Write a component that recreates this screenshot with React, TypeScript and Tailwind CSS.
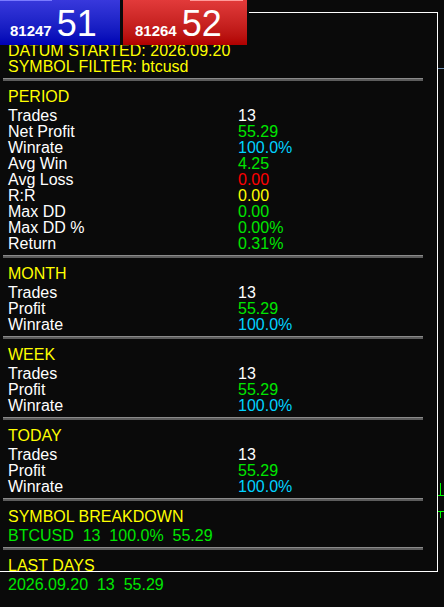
import React from "react";

type Row = { label: string; value: string; color: string };

const WHITE = "text-white";
const GREEN = "text-[#00e600]";
const CYAN = "text-[#00d2ff]";
const RED = "text-[#ff0000]";
const YELLOW = "text-[#ffff00]";

const period: Row[] = [
  { label: "Trades", value: "13", color: WHITE },
  { label: "Net Profit", value: "55.29", color: GREEN },
  { label: "Winrate", value: "100.0%", color: CYAN },
  { label: "Avg Win", value: "4.25", color: GREEN },
  { label: "Avg Loss", value: "0.00", color: RED },
  { label: "R:R", value: "0.00", color: YELLOW },
  { label: "Max DD", value: "0.00", color: GREEN },
  { label: "Max DD %", value: "0.00%", color: GREEN },
  { label: "Return", value: "0.31%", color: GREEN },
];

const short: Row[] = [
  { label: "Trades", value: "13", color: WHITE },
  { label: "Profit", value: "55.29", color: GREEN },
  { label: "Winrate", value: "100.0%", color: CYAN },
];

function Separator() {
  return (
    <div className="ml-[-5px] mt-[3px] mb-[8px] h-[3px] w-[420px] border-t border-[#8a8a8a] bg-[#5c5c5c]" />
  );
}

function Section({ title, rows }: { title: string; rows: Row[] }) {
  return (
    <>
      <div className="mb-[3px] text-[#ffff00]">{title}</div>
      {rows.map((r) => (
        <div key={r.label} className="grid grid-cols-[230px_1fr]">
          <span className="text-white">{r.label}</span>
          <span className={r.color}>{r.value}</span>
        </div>
      ))}
      <Separator />
    </>
  );
}

function PriceButton({
  code,
  big,
  tone,
}: {
  code: string;
  big: string;
  tone: "blue" | "red";
}) {
  const blue = tone === "blue";
  return (
    <div
      className={
        blue
          ? "relative flex h-[45px] w-[120px] items-baseline gap-[5px] bg-linear-to-b from-[#3838dc] to-[#0000b4] pl-[10px] pt-[6px]"
          : "relative flex h-[45px] w-[124px] items-baseline gap-[5px] bg-linear-to-b from-[#e23a3a] to-[#b00000] pl-[12px] pt-[6px]"
      }
    >
      {/* top highlight strip */}
      <div
        className={
          blue
            ? "absolute left-0 top-0 h-px w-[52px] bg-[#7a7aff]"
            : "absolute right-[4px] top-0 h-px w-[53px] bg-[#ff9a9a]"
        }
      />
      <span className="text-[15px] font-bold leading-none text-white">{code}</span>
      <span className="text-[36px] leading-none text-white">{big}</span>
    </div>
  );
}

export default function App() {
  return (
    <div className="relative h-[607px] w-[444px] overflow-hidden bg-[#0a0a0a] font-['Liberation_Sans',Arial,sans-serif] text-[16px] leading-[16px]">
      {/* stats panel */}
      <div className="flex flex-col pl-[8px] pt-[43px]">
        <div className="text-[#ffff00]">DATUM STARTED: 2026.09.20</div>
        <div className="text-[#ffff00]">SYMBOL FILTER: btcusd</div>
        <Separator />
        <Section title="PERIOD" rows={period} />
        <Section title="MONTH" rows={short} />
        <Section title="WEEK" rows={short} />
        <Section title="TODAY" rows={short} />
        <div className="mb-[3px] text-[#ffff00]">SYMBOL BREAKDOWN</div>
        <div className={`whitespace-pre ${GREEN}`}>BTCUSD  13  100.0%  55.29</div>
        <Separator />
        <div className="mb-[3px] text-[#ffff00]">LAST DAYS</div>
        <div className={`whitespace-pre ${GREEN}`}>2026.09.20  13  55.29</div>
      </div>

      {/* chart frame */}
      <div className="pointer-events-none absolute left-[-1px] top-[12px] z-10 h-[560px] w-[439px] border border-white" />

      {/* price level & bars at right edge */}
      <div className="absolute left-[438px] top-[68px] h-px w-[6px] bg-[#6f8fb0]" />
      <svg
        className="absolute left-[438px] top-[483px]"
        width="6"
        height="35"
        viewBox="0 0 6 35"
        shapeRendering="crispEdges"
      >
        <path d="M2.5 0V12.5M0 12.5H6M0 28.5H6M2.5 28.5V35" stroke="#00ff00" strokeWidth="1" fill="none" />
      </svg>

      {/* buy / sell buttons */}
      <div className="absolute left-0 top-0 z-20 flex h-[45px] w-[249px] gap-[3px] bg-[#0a0a0a]">
        <PriceButton code="81247" big="51" tone="blue" />
        <PriceButton code="81264" big="52" tone="red" />
      </div>
    </div>
  );
}
